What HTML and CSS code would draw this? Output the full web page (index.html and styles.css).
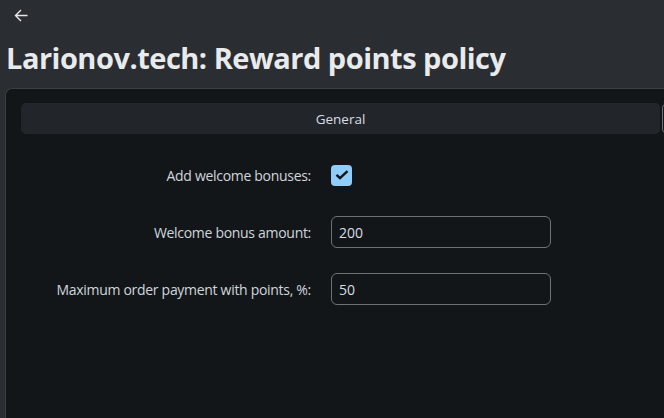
FILE: index.html
```html
<!DOCTYPE html>
<html>
<head>
<meta charset="utf-8">
<link rel="stylesheet" href="styles.css">
</head>
<body>
<div class="topbar">
  <svg class="back" width="14" height="13" viewBox="0 0 14 13"><path d="M13.5 6.5H1.5M7 1L1.5 6.5L7 12" fill="none" stroke="#e6e8ea" stroke-width="1.4"/></svg>
</div>
<h1 class="title">Larionov.tech: Reward points policy</h1>
<div class="panel">
  <div class="tabs">
    <div class="tab active">General</div>
    <div class="tab other"></div>
  </div>
  <div class="form">
    <label class="label">Add welcome bonuses:</label>
    <div class="field"><span class="check"><svg width="14" height="10" viewBox="0 0 14 10"><path d="M1.5 4.8L5 8.2L12.5 1.2" fill="none" stroke="#111417" stroke-width="2.4"/></svg></span></div>
    <label class="label">Welcome bonus amount:</label>
    <div class="field"><div class="input">200</div></div>
    <label class="label">Maximum order payment with points, %:</label>
    <div class="field"><div class="input">50</div></div>
  </div>
</div>
</body>
</html>
```

FILE: styles.css
```css
html, body {
  margin: 0;
  padding: 0;
  height: 100%;
  overflow: hidden;
}
body {
  background: #2a2d31;
  font-family: "Open Sans", "Noto Sans", sans-serif;
  color: #d3d9df;
  display: flex;
  flex-direction: column;
}
.topbar {
  height: 30px;
  padding: 9px 0 0 14px;
  box-sizing: border-box;
}
.back { display: block; }
.title {
  margin: 6px 0 0 6px;
  font-size: 29px;
  line-height: 44px;
  font-weight: 700;
  color: #e8eaec;
  letter-spacing: -0.5px;
  white-space: nowrap;
}
.panel {
  flex: 1;
  margin: 8px 0 0 5px;
  background: #131619;
  border: 1px solid #3b3f43;
  border-right: none;
  border-bottom: none;
  border-top-left-radius: 7px;
  padding: 14px 0 0 15px;
}
.tabs {
  display: flex;
  gap: 2px;
  height: 31px;
}
.tab {
  flex: none;
  border-radius: 5px;
  box-sizing: border-box;
}
.tab.active {
  width: 639px;
  background: #22262a;
  display: flex;
  align-items: center;
  justify-content: center;
  font-size: 13.5px;
  color: #d8dde2;
}
.tab.other {
  width: 100px;
  border: 1px solid #6e7276;
}
.form {
  margin-top: 25px;
  display: grid;
  grid-template-columns: 290px 220px;
  grid-auto-rows: 32px;
  column-gap: 20px;
  row-gap: 25px;
  align-items: center;
}
.label {
  text-align: right;
  font-size: 14px;
  color: #cfd6dd;
  letter-spacing: -0.3px;
  white-space: nowrap;
}
.field {
  display: flex;
  align-items: center;
}
.check {
  width: 21px;
  height: 21px;
  border-radius: 4px;
  background: #8fcdfb;
  display: flex;
  align-items: center;
  justify-content: center;
}
.input {
  width: 220px;
  height: 32px;
  box-sizing: border-box;
  border: 1px solid #6e7276;
  border-radius: 6px;
  padding: 0 7px;
  display: flex;
  align-items: center;
  font-size: 14px;
  color: #d8dee4;
}
```
